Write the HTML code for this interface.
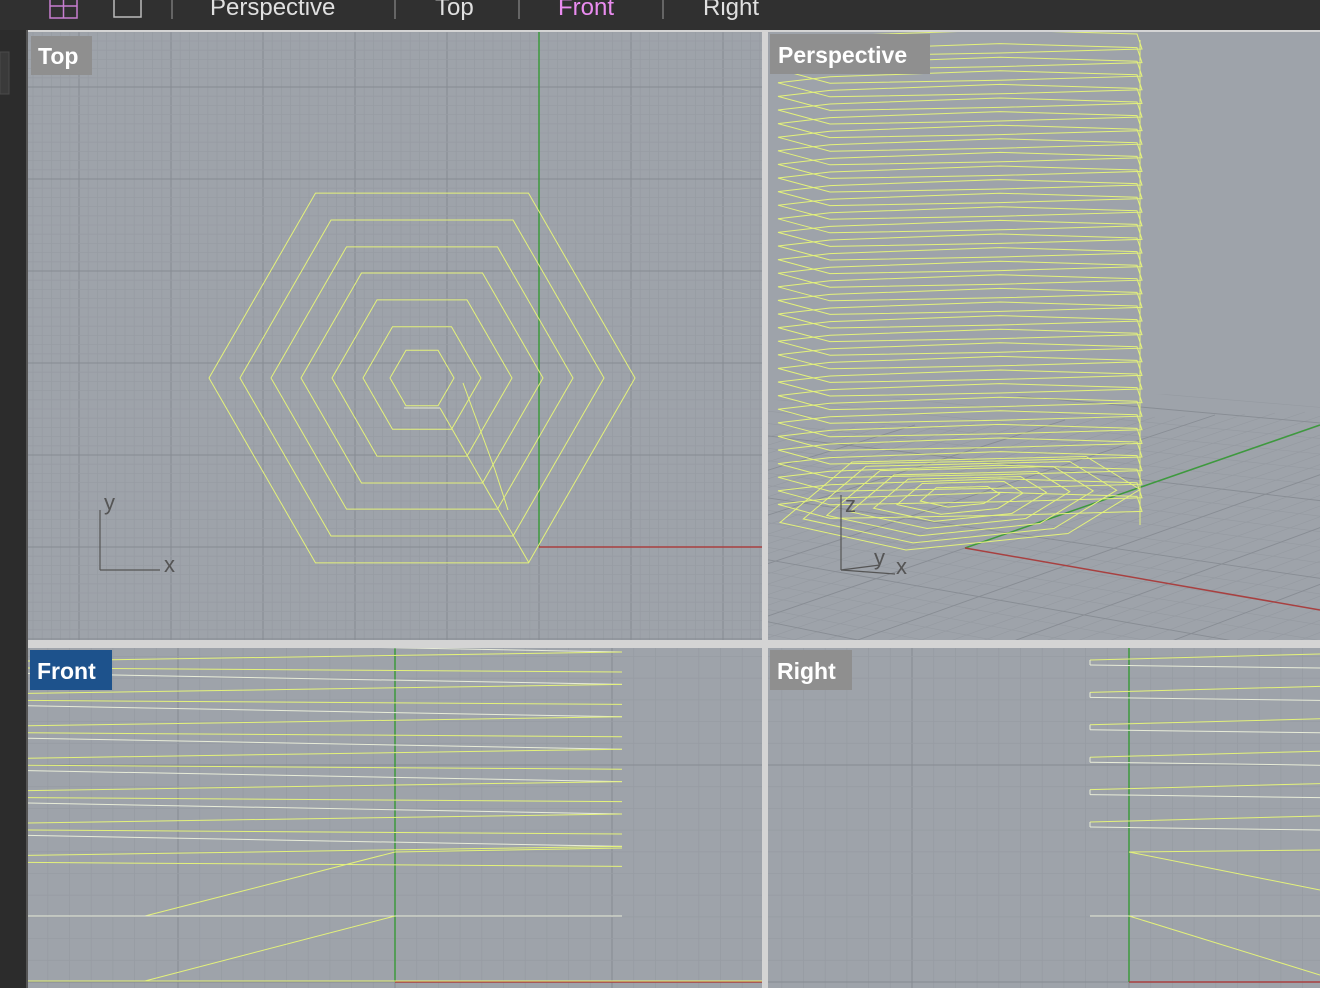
<!DOCTYPE html>
<html><head><meta charset="utf-8"><style>
html,body{margin:0;padding:0;background:#303030;overflow:hidden;width:1320px;height:988px}
svg{display:block;position:absolute;left:0;top:0}
text{font-family:"Liberation Sans",sans-serif}
</style></head><body>
<svg id="s" width="1320" height="988" viewBox="0 0 1320 988" xmlns="http://www.w3.org/2000/svg">
<defs>
<clipPath id="cTop"><rect x="28" y="32" width="734" height="608"/></clipPath>
<clipPath id="cPer"><rect x="768" y="32" width="552" height="608"/></clipPath>
<clipPath id="cFr"><rect x="28" y="648" width="734" height="340"/></clipPath>
<clipPath id="cRt"><rect x="768" y="648" width="552" height="340"/></clipPath>
<clipPath id="cGround"><polygon points="768,400 1320,392 1320,640 768,640"/></clipPath>
</defs>
<rect width="1320" height="988" fill="#303030"/>
<rect x="0" y="30" width="26" height="958" fill="#2c2c2c"/>
<rect x="0" y="52" width="9" height="42" fill="#3a3a3a" stroke="#4a4a4a"/>
<rect x="26" y="30" width="2" height="958" fill="#555"/>
<rect x="28" y="30" width="1292" height="958" fill="#d4d4d4"/>
<rect x="28" y="32" width="734" height="608" fill="#9ea3aa"/>
<rect x="768" y="32" width="552" height="608" fill="#9ea3aa"/>
<rect x="28" y="648" width="734" height="340" fill="#9ea3aa"/>
<rect x="768" y="648" width="552" height="340" fill="#9ea3aa"/>
<g id="g"></g>
<g fill="none" stroke="#c77ed0" stroke-width="1.5"><rect x="50" y="-2" width="27" height="20"/><line x1="63.5" y1="-2" x2="63.5" y2="18"/><line x1="50" y1="6" x2="77" y2="6"/></g>
<rect x="114" y="-2" width="27" height="19" fill="none" stroke="#bbb" stroke-width="1.5"/>
<g stroke="#777" stroke-width="1.5"><line x1="172" y1="0" x2="172" y2="19"/><line x1="395" y1="0" x2="395" y2="19"/><line x1="519" y1="0" x2="519" y2="19"/><line x1="663" y1="0" x2="663" y2="19"/></g>
<g font-size="24" fill="#e0e0e0"><text x="210" y="15">Perspective</text><text x="435" y="15">Top</text><text x="558" y="15" fill="#ea8cf0">Front</text><text x="703" y="15">Right</text></g>
<rect x="31" y="36" width="61" height="39" fill="#8f8f8f"/><text x="38" y="64" font-size="23" font-weight="bold" fill="#fff">Top</text>
<rect x="770" y="34" width="160" height="40" fill="#8f8f8f"/><text x="778" y="63" font-size="23" font-weight="bold" fill="#fff">Perspective</text>
<rect x="30" y="650" width="82" height="40" fill="#1d528c"/><text x="37" y="679" font-size="23" font-weight="bold" fill="#fff">Front</text>
<rect x="770" y="650" width="82" height="40" fill="#8f8f8f"/><text x="777" y="679" font-size="23" font-weight="bold" fill="#fff">Right</text>
</svg>
<script>
var G=document.getElementById("g"),out="";
function L(x1,y1,x2,y2,c,w){out+='<line x1="'+x1+'" y1="'+y1+'" x2="'+x2+'" y2="'+y2+'" stroke="'+c+'" stroke-width="'+(w||1)+'"/>';}
function grid(x0,y0,w,h,ox,oy,step,clip){
  out+='<g clip-path="url(#'+clip+')">';
  var m=step/10;
  for(var x=ox-Math.ceil((ox-x0)/m)*m;x<x0+w;x+=m){var k=Math.round((x-ox)/m);L(x,y0,x,y0+h,k%10==0?"#868b92":"#979ca3",k%10==0?1:0.8);}
  for(var y=oy-Math.ceil((oy-y0)/m)*m;y<y0+h;y+=m){var k=Math.round((y-oy)/m);L(x0,y,x0+w,y,k%10==0?"#868b92":"#979ca3",k%10==0?1:0.8);}
  out+='</g>';
}
var Y="#e4f27a",W="#e8ecd8";
grid(28,32,734,608,539,547,92,"cTop");
out+='<g clip-path="url(#cTop)">';
L(539,32,539,547,"#3d9a3d",1.5);L(539,547,762,547,"#a84040",1.5);
var cx=422,cy=378,as=[213,182,151,121,90,59,32];
as.forEach(function(a){var h=a*0.868,b=a/2;
 out+='<polygon points="'+(cx-b)+','+(cy-h)+' '+(cx+b)+','+(cy-h)+' '+(cx+a)+','+cy+' '+(cx+b)+','+(cy+h)+' '+(cx-b)+','+(cy+h)+' '+(cx-a)+','+cy+'" fill="none" stroke="'+Y+'" stroke-width="1"/>';});
L(404,408,440,408,W);L(440,408,529,563,Y);L(463,383,495,470,Y);L(495,470,508,510,Y);
L(100,510,100,570,"#555",1.2);L(100,570,160,570,"#555",1.2);
out+='<text x="104" y="510" font-size="22" fill="#555">y</text><text x="164" y="572" font-size="22" fill="#555">x</text>';
out+='</g>';
out+='<g clip-path="url(#cGround)">';
for(var i=-40;i<60;i++){var b=560+i*12;L(700,b-12,1400,b+110+i*4,"#959aa1",0.6);}
for(var i=-40;i<60;i++){var x=965+i*30;L(x-400,548+138+i,x+400,548-138-i,"#959aa1",0.6);}
for(var i=-8;i<12;i++){var b=560+i*60;L(700,b-12,1400,b+110+i*20,"#888d94",0.9);}
for(var i=-8;i<12;i++){var x=965+i*150;L(x-400,548+138+i*5,x+400,548-138-i*5,"#888d94",0.9);}
out+='</g><g clip-path="url(#cPer)">';
L(965,548,1320,425,"#3d9a3d",1.5);L(965,548,1320,610,"#a84040",1.5);
for(var i=0;i<35;i++){var y=42+i*13.6;
 out+='<polygon points="778,'+y+' 830,'+(y+14)+' 1000,'+(y+11)+' 1142,'+(y+7)+' 1137,'+(y-8)+' 1000,'+(y-12)+' 830,'+(y-6)+'" fill="none" stroke="'+Y+'" stroke-width="1"/>';}
for(var i=0;i<7;i++){var s=1-i*0.13,cxp=960,cyp=495,rx=180*s,ry=55*s;
 out+='<polygon points="'+(cxp-rx)+','+(cyp+ry*0.5)+' '+(cxp-rx*0.6)+','+(cyp-ry*0.6)+' '+(cxp+rx*0.7)+','+(cyp-ry*0.7)+' '+(cxp+rx)+','+(cyp-ry*0.1)+' '+(cxp+rx*0.6)+','+(cyp+ry*0.7)+' '+(cxp-rx*0.3)+','+(cyp+ry)+'" fill="none" stroke="'+Y+'" stroke-width="1"/>';}
L(1140,40,1140,525,Y);
L(841,495,841,570,"#555",1.2);L(841,570,880,565,"#555",1.2);L(841,570,895,574,"#555",1.2);
out+='<text x="845" y="512" font-size="22" fill="#555">z</text><text x="874" y="565" font-size="22" fill="#555">y</text><text x="896" y="574" font-size="22" fill="#555">x</text>';
out+='</g>';
grid(28,648,734,340,395,982,217,"cFr");
out+='<g clip-path="url(#cFr)">';
L(395,648,395,982,"#3d9a3d",1.5);L(395,982,762,982,"#a84040",1.5);
for(var k=0;k<7;k++){var yr=652+k*32.4;L(28,yr-11,622,yr,W);L(28,yr+9,622,yr,Y);L(28,yr+16,622,yr+20,Y);}
L(395,852,622,848,Y);L(395,852,145,916,Y);L(28,916,622,916,W);L(395,916,145,981,Y);L(28,981,762,981,Y);
out+='</g>';
grid(768,648,552,340,1129,982,217,"cRt");
out+='<g clip-path="url(#cRt)">';
L(1129,648,1129,982,"#3d9a3d",1.5);L(1129,982,1320,982,"#a84040",1.5);
for(var k=0;k<6;k++){var yr=660+k*32.4;L(1090,yr,1320,yr-6,Y);L(1090,yr,1090,yr+5,W);L(1090,yr+5,1320,yr+8,W);}
L(1129,852,1320,890,Y);L(1129,852,1320,850,Y);L(1090,916,1320,916,W);L(1129,916,1320,975,Y);
out+='</g>';
G.innerHTML=out;
</script>
</body></html>
